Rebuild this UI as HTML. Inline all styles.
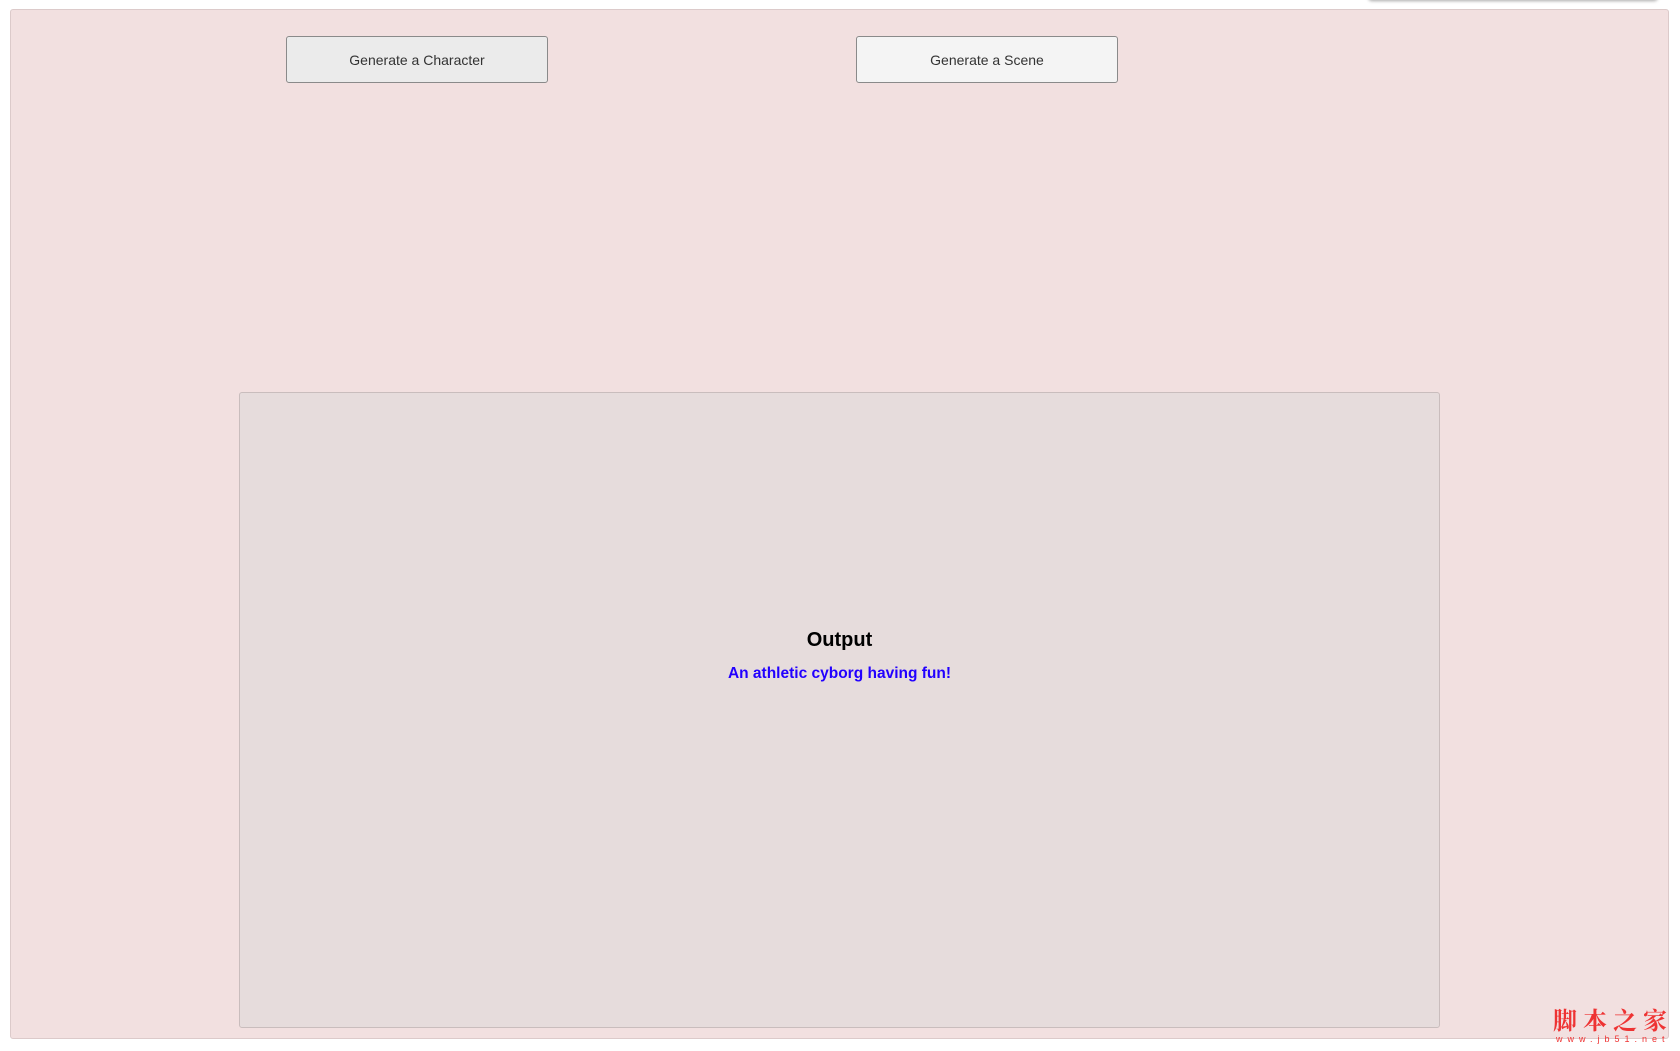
<!DOCTYPE html>
<html><head><meta charset="utf-8"><style>
html,body{margin:0;padding:0;width:1680px;height:1051px;background:#fff;overflow:hidden;font-family:"Liberation Sans",Arial,sans-serif;position:relative}
.panel{position:absolute;left:10px;top:9px;width:1659px;height:1030px;background:#f2e0e0;border:1px solid #dccaca;border-radius:3px;box-sizing:border-box}
.topbar{position:absolute;left:1368px;top:-4px;width:290px;height:4px;background:#eee;box-shadow:0 1px 3px rgba(0,0,0,.35);border-radius:0 0 4px 4px}
.btn{position:absolute;top:36px;width:262px;height:47px;border:1px solid #8a8a8a;border-radius:3px;box-sizing:border-box;font-size:14px;color:#333;text-align:center;line-height:46px}
.b1{left:286px;background:#ebebeb}
.b2{left:856px;background:#f4f4f4}
.out{position:absolute;left:239px;top:392px;width:1201px;height:636px;background:#e6dcdc;border:1px solid #c9bdbd;border-radius:3px;box-sizing:border-box}
.t1{position:absolute;left:0;width:100%;top:236px;text-align:center;font-weight:bold;font-size:20px;color:#000}
.t2{position:absolute;left:0;width:100%;top:272px;text-align:center;font-weight:bold;font-size:15.5px;color:#2200ff}
.wm{position:absolute;left:1553px;top:1001px;font-family:"Noto Serif CJK SC","WenQuanYi Zen Hei",serif;font-weight:bold;font-size:24px;color:#ee3333;letter-spacing:6px}
.wm2{position:absolute;left:1556px;top:1034px;font-size:9px;color:#ee3333;letter-spacing:5px}
</style></head><body>
<div class="topbar"></div>
<div class="panel"></div>
<div class="btn b1">Generate a Character</div>
<div class="btn b2">Generate a Scene</div>
<div class="out"><div class="t1">Output</div><div class="t2">An athletic cyborg having fun!</div></div>
<div class="wm">脚本之家</div>
<div class="wm2">www.jb51.net</div>
</body></html>
